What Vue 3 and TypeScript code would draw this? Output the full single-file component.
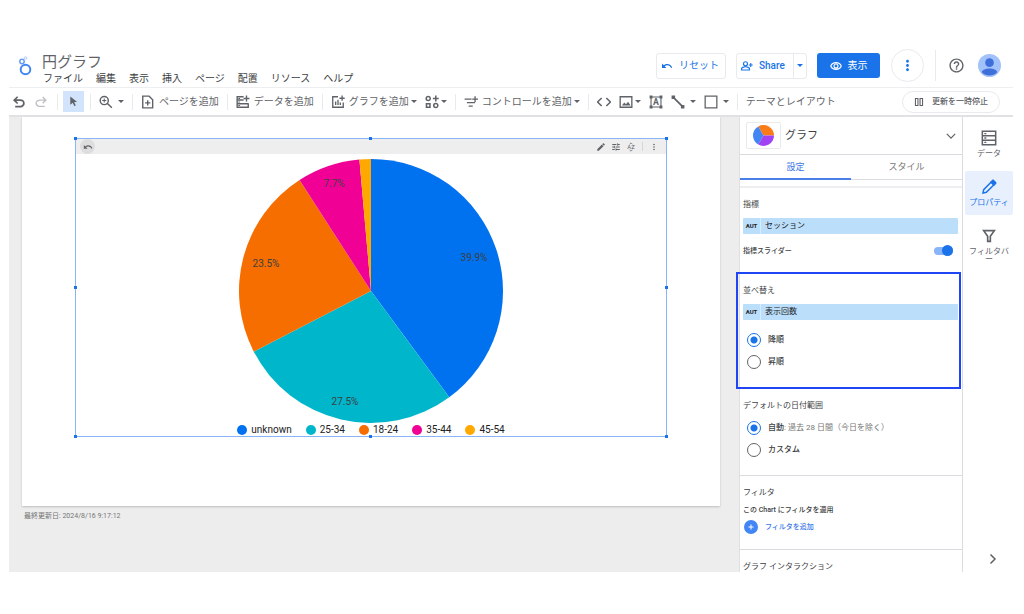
<script setup lang="ts">
import { computed, ref } from 'vue'

const line = (d: string, width = 2): string =>
  `<path d="${d}" fill="none" stroke="currentColor" stroke-width="${width}"/>`
const solid = (d: string): string => `<path d="${d}" fill="currentColor"/>`

const icons: Record<string, string> = {
  undo: solid('M6 20.500v-2.800h8.100q1.575 0 2.738-1T18.200 13.800t-1.162-2.500T14.100 10.500H7.800l3 3L9 15.200 2.500 9.100 9 2.900l1.800 1.800L7.800 7.700h6.300q2.900 0 4.800 1.700T21 13.800t-2.100 4.900T14.100 20.500z'),
  redo: `<g transform="matrix(-1 0 0 1 24 0)">${solid('M6 20v-2.200h8.100q1.575 0 2.738-1T18.500 13.800t-1.162-2.500T14.100 10.100H7.100l3 3L8.600 14.700 3 9.100 8.600 3.400l1.500 1.500L7.100 7.900h7q2.700 0 4.600 1.700T20.700 13.800t-2 4.500T14.100 20z')}</g>`,
  reset: solid('M12.5 8c-2.65 0-5.05.99-6.9 2.6L2 7v9h9l-3.62-3.62c1.39-1.16 3.16-1.88 5.12-1.88 3.54 0 6.55 2.31 7.6 5.5l2.37-.78C21.08 11.03 17.15 8 12.5 8z'),
  cursor: solid('M5 1l15 12h-6.500l3.500 7.500-3.200 1.500-3.500-7.500L5 19z'),
  zoom: line('M16 9.500a7 7 0 1 1-14 0a7 7 0 1 1 14 0M14.500 14.500L22 22', 2.5) + line('M9 6v7M5.500 9.500h7', 1.8),
  page: line('M3 2h11l6 6v14H3zM11.500 9v9M7 13.500h9', 2.4),
  data: line('M13 3H2v18h19v-7M2 8.500h11M2 15h19M18 1v10M13 6h10', 2.4) + solid('M4 5h3v2H4zM4 11h3v2H4zM4 17h3v2H4z'),
  chart: line('M12 3H3v18h18v-8M8 17v-6M12 17v-9M16 17v-4M19 1v9M14.500 5.500h9', 2.3),
  community: line('M9 6a3.500 3.500 0 1 1-7 0a3.500 3.500 0 1 1 7 0M22 18a3.500 3.500 0 1 1-7 0a3.500 3.500 0 1 1 7 0M2.500 15h6v6h-6zM18.500 1v10M13.500 6h10', 2.6),
  control: line('M1 7h12M5 13h14M8 19h7M19 2v10M14 7h10', 2.3),
  code: line('M8 5l-7 7 7 7M16 5l7 7-7 7', 2.5),
  image: line('M2 3h20v18H2z', 2.3) + solid('M5 18l4-5 3 3 3.500-4.500L20 18z'),
  textbox: line('M3.500 3.500h17v17h-17z', 1.9) + solid('M1 1h5v5H1zM18 1h5v5H18zM1 18h5v5H1zM18 18h5v5H18z') +
    '<text x="12" y="17.500" font-size="15" font-weight="700" text-anchor="middle" fill="currentColor">A</text>',
  stroke: line('M4 4l16 16', 3) + solid('M1 1h6v6H1zM17 17h6v6h-6z'),
  shape: line('M2 2h20v20H2z', 2.2),
  pause: line('M3.500 3.500h6v17h-6zM14.500 3.500h6v17h-6z', 2.6),
  person: line('M13 7.500a4 4 0 1 1-8 0a4 4 0 1 1 8 0M1 20v-2.500c0-2 4.500-4 8-4s8 2 8 4V20zM19.500 6v8M15.500 10h8', 2.3),
  eye: line('M1.500 12C5 3 19 3 22.500 12C19 21 5 21 1.500 12zM16 12a4 4 0 1 1-8 0a4 4 0 1 1 8 0', 2.2),
  more: solid('M12 8c1.100 0 2-.9 2-2s-.9-2-2-2-2 .9-2 2 .9 2 2 2zm0 2c-1.100 0-2 .9-2 2s.9 2 2 2 2-.9 2-2-.9-2-2-2zm0 6c-1.100 0-2 .9-2 2s.9 2 2 2 2-.9 2-2-.9-2-2-2z'),
  help: solid('M11 18h2v-2h-2v2zm1-16C6.480 2 2 6.480 2 12s4.480 10 10 10 10-4.480 10-10S17.520 2 12 2zm0 18c-4.410 0-8-3.590-8-8s3.590-8 8-8 8 3.590 8 8-3.590 8-8 8zm0-14c-2.210 0-4 1.790-4 4h2c0-1.100.9-2 2-2s2 .9 2 2c0 2-3 1.750-3 5h2c0-2.250 3-2.500 3-5 0-2.210-1.790-4-4-4z'),
  edit: solid('M3 17.250V21h3.750L17.810 9.940l-3.750-3.750L3 17.250zM20.710 7.040c.39-.39.39-1.020 0-1.410l-2.340-2.340c-.39-.39-1.020-.39-1.410 0l-1.830 1.830 3.750 3.750 1.830-1.830z'),
  tune: solid('M3 17v2h6v-2H3zM3 5v2h10V5H3zm10 16v-2h8v-2h-8v-2h-2v6h2zM7 9v2H3v2h4v2h2V9H7zm14 4v-2H11v2h10zm-6-4h2V7h4V5h-4V3h-2v6z'),
  sort: line('M8.500 5.500L12 2l3.500 3.500M8.500 18.500L12 22l3.500-3.500', 1.8) +
    '<text x="12" y="17" font-size="14" text-anchor="middle" fill="currentColor">AZ</text>',
  down: line('M2 7l10 10L22 7', 3),
  right: line('M7 3l9 9-9 9', 3),
  table: line('M2 2h20v20H2zM2 8.700h20M2 15.300h20', 2.3) + solid('M5 4.500h3v2H5zM5 11h3v2H5zM5 17.500h3v2H5z'),
  pen: line('M3 21l1-5L15 5l4 4L8 20z', 2.2) + solid('M14 4l2.500-2.500c1-1 2-1 3 0l3 3c1 1 1 2 0 3L20 10z'),
  funnel: line('M4 4h16L14 12.500V20h-4v-7.500z', 2.5),
}

const menus = ['ファイル', '編集', '表示', '挿入', 'ページ', '配置', 'リソース', 'ヘルプ']

interface Slice { label: string; value: number; color: string; caption?: [number, number] }
const slices: Slice[] = [
  { label: 'unknown', value: 39.9, color: '#0072f0', caption: [235, 102] },
  { label: '25-34', value: 27.5, color: '#00b6cb', caption: [106, 246] },
  { label: '18-24', value: 23.5, color: '#f66d00', caption: [27, 108] },
  { label: '35-44', value: 7.7, color: '#f10096', caption: [95, 28] },
  { label: '45-54', value: 1.4, color: '#ffa800' },
]

const wedges = computed(() => {
  let start = 0
  const c = 132
  const point = (pct: number): string => {
    const a = (pct / 100) * Math.PI * 2
    return `${(c + c * Math.sin(a)).toFixed(2)} ${(c - c * Math.cos(a)).toFixed(2)}`
  }
  return slices.map((s) => {
    const end = start + s.value
    const d = `M${c} ${c}L${point(start)}A${c} ${c} 0 0 1 ${point(end)}Z`
    start = end
    return { ...s, d }
  })
})

const handles = ['nw', 'n', 'ne', 'w', 'e', 'sw', 's', 'se']
const order = ref('desc')
const range = ref('auto')
const slider = ref(true)
</script>

<template>
  <div class="app">
    <header class="header">
      <svg class="logo" viewBox="0 0 14 20" fill="none">
        <circle cx="7.500" cy="13.500" r="4.800" stroke="#4285f4" stroke-width="2" />
        <circle cx="4" cy="5.500" r="2.200" stroke="#669df6" stroke-width="1.500" />
        <circle cx="7.500" cy="2" r="1.300" stroke="#aecbfa" />
      </svg>
      <div class="titles">
        <h1>円グラフ</h1>
        <nav class="menus"><button v-for="m in menus" :key="m" type="button">{{ m }}</button></nav>
      </div>
      <div class="actions">
        <button class="outlined reset" type="button"><svg class="i12" viewBox="0 0 24 24" v-html="icons.reset" />リセット</button>
        <div class="outlined split">
          <button class="share" type="button"><svg class="i12" viewBox="0 0 24 24" v-html="icons.person" />Share</button>
          <button class="share-more" type="button" aria-label="共有オプション"><i class="caret" /></button>
        </div>
        <button class="view" type="button"><svg class="i12" viewBox="0 0 24 24" v-html="icons.eye" />表示</button>
        <button class="round" type="button" aria-label="その他"><svg viewBox="0 0 24 24" v-html="icons.more" /></button>
        <span class="rule" />
        <button class="help" type="button" aria-label="ヘルプ"><svg viewBox="0 0 24 24" v-html="icons.help" /></button>
        <button class="avatar" type="button" aria-label="アカウント">
          <svg viewBox="0 0 24 24"><circle cx="12" cy="12" r="12" fill="#a1c2fa" /><circle cx="12" cy="9" r="4.500" fill="#3f6fd8" /><path d="M4 19c1-5 15-5 16 0a11 11 0 0 1-16 0z" fill="#3f6fd8" /></svg>
        </button>
      </div>
    </header>

    <div class="toolbar" role="toolbar">
      <div class="group history">
        <button type="button" aria-label="元に戻す"><svg class="icon" viewBox="1 1 22 22" v-html="icons.undo" /></button>
        <button class="faded" type="button" aria-label="やり直す"><svg class="icon" viewBox="1 1 22 22" v-html="icons.redo" /></button>
      </div>
      <div class="group pick">
        <button class="selected" type="button" aria-label="選択"><svg viewBox="0 0 24 24" v-html="icons.cursor" /></button>
      </div>
      <div class="group">
        <button class="loose" type="button" aria-label="ズーム"><svg class="icon" viewBox="0 0 24 24" v-html="icons.zoom" /><i class="caret" /></button>
      </div>
      <div class="group">
        <button type="button"><svg class="icon lead" viewBox="0 0 24 24" v-html="icons.page" />ページを追加</button>
      </div>
      <div class="group">
        <button type="button"><svg class="icon lead" viewBox="0 0 24 24" v-html="icons.data" />データを追加</button>
      </div>
      <div class="group">
        <button type="button"><svg class="icon lead" viewBox="0 0 24 24" v-html="icons.chart" />グラフを追加<i class="caret" /></button>
        <button type="button" aria-label="コミュニティ"><svg class="icon" viewBox="0 0 24 24" v-html="icons.community" /><i class="caret" /></button>
      </div>
      <div class="group">
        <button type="button"><svg class="icon lead" viewBox="0 0 24 24" v-html="icons.control" />コントロールを追加<i class="caret" /></button>
      </div>
      <div class="group">
        <button type="button" aria-label="埋め込み"><svg class="icon" viewBox="0 0 24 24" v-html="icons.code" /></button>
        <button type="button" aria-label="画像"><svg class="icon" viewBox="0 0 24 24" v-html="icons.image" /><i class="caret" /></button>
        <button type="button" aria-label="テキスト"><svg class="icon" viewBox="0 0 24 24" v-html="icons.textbox" /></button>
        <button class="loose" type="button" aria-label="線"><svg class="icon" viewBox="0 0 24 24" v-html="icons.stroke" /><i class="caret" /></button>
        <button class="loose" type="button" aria-label="図形"><svg class="icon" viewBox="0 0 24 24" v-html="icons.shape" /><i class="caret" /></button>
      </div>
      <div class="group"><button type="button">テーマとレイアウト</button></div>
      <button class="pause" type="button"><svg viewBox="0 0 24 24" v-html="icons.pause" />更新を一時停止</button>
    </div>

    <div class="workspace">
      <main class="canvas">
        <div class="page">
          <section class="chart">
            <div class="chart-bar">
              <button class="chart-undo" type="button" aria-label="リセット"><svg viewBox="0 0 24 24" v-html="icons.reset" /></button>
              <div class="chart-tools">
                <button type="button" aria-label="編集"><svg viewBox="0 0 24 24" v-html="icons.edit" /></button>
                <button type="button" aria-label="調整"><svg viewBox="0 0 24 24" v-html="icons.tune" /></button>
                <button type="button" aria-label="並べ替え"><svg viewBox="0 0 24 24" v-html="icons.sort" /></button>
                <span class="bar-rule" />
                <button type="button" aria-label="その他"><svg viewBox="0 0 24 24" v-html="icons.more" /></button>
              </div>
            </div>
            <svg class="pie" viewBox="0 0 264 264" role="img" aria-label="円グラフ">
              <path v-for="w in wedges" :key="w.label" :d="w.d" :fill="w.color" />
              <template v-for="w in wedges" :key="w.label">
                <text v-if="w.caption" :x="w.caption[0]" :y="w.caption[1]" text-anchor="middle">{{ w.value }}%</text>
              </template>
            </svg>
            <ul class="legend">
              <li v-for="s in slices" :key="s.label">
                <svg viewBox="0 0 10 10"><circle cx="5" cy="5" r="5" :fill="s.color" /></svg>{{ s.label }}
              </li>
            </ul>
            <span v-for="h in handles" :key="h" class="handle" :class="h" />
          </section>
        </div>
        <p class="updated">最終更新日: 2024/8/16 9:17:12</p>
      </main>

      <aside class="panel">
        <div class="panel-head">
          <span class="thumb">
            <svg viewBox="0 0 20 20"><path d="M10 10H20A10 10 0 0 0 5 1.340z" fill="#fa7b17" /><path d="M10 10L5 1.340A10 10 0 0 0 5 18.660z" fill="#4285f4" /><path d="M10 10L5 18.660A10 10 0 0 0 20 10z" fill="#a142f4" /></svg>
          </span>
          <h2>グラフ</h2>
          <button class="expand" type="button" aria-label="グラフの種類"><svg viewBox="0 0 24 24" v-html="icons.down" /></button>
        </div>
        <div class="tabs" role="tablist">
          <button class="active" type="button" role="tab" aria-selected="true">設定</button>
          <button type="button" role="tab" aria-selected="false">スタイル</button>
        </div>
        <section class="metric">
          <h3>指標</h3>
          <button class="chip" type="button"><b>AUT</b><span>セッション</span></button>
          <label class="slider-row">指標スライダー<input v-model="slider" class="toggle" type="checkbox" /></label>
        </section>
        <section class="sorting">
          <h3>並べ替え</h3>
          <button class="chip" type="button"><b>AUT</b><span>表示回数</span></button>
          <div class="radios">
            <label><input v-model="order" type="radio" name="order" value="desc" /><span>降順</span></label>
            <label><input v-model="order" type="radio" name="order" value="asc" /><span>昇順</span></label>
          </div>
        </section>
        <section class="dates">
          <h3>デフォルトの日付範囲</h3>
          <div class="radios">
            <label><input v-model="range" type="radio" name="range" value="auto" /><span>自動<small>: 過去 28 日間（今日を除く）</small></span></label>
            <label><input v-model="range" type="radio" name="range" value="custom" /><span>カスタム</span></label>
          </div>
        </section>
        <section class="filters">
          <h3>フィルタ</h3>
          <p>この Chart にフィルタを適用</p>
          <button class="add" type="button">
            <svg viewBox="0 0 14 14"><circle cx="7" cy="7" r="7" fill="#4285f4" /><path d="M7 4.500v5M4.500 7h5" stroke="#fff" /></svg>フィルタを追加
          </button>
        </section>
        <section class="interaction"><h3>グラフ インタラクション</h3></section>
      </aside>

      <nav class="rail">
        <button type="button"><svg viewBox="0 0 24 24" v-html="icons.table" />データ</button>
        <button class="current" type="button"><svg viewBox="0 0 24 24" v-html="icons.pen" />プロパティ</button>
        <button type="button"><svg viewBox="0 0 24 24" v-html="icons.funnel" />フィルタバー</button>
        <button class="collapse" type="button" aria-label="閉じる"><svg viewBox="0 0 24 24" v-html="icons.right" /></button>
      </nav>
    </div>
  </div>
</template>

<style>
html,
body {
  background: #fff;
}
</style>

<style scoped>
.app {
  box-sizing: border-box;
  height: 100vh;
  padding: 48px 11px 42px 9px;
  display: flex;
  flex-direction: column;
  overflow: hidden;
  font-family: Roboto, 'Noto Sans CJK JP', sans-serif;
  font-size: 10px;
  line-height: 12px;
  color: #5f6368;
}
.app * {
  box-sizing: border-box;
}
button {
  display: flex;
  align-items: center;
  margin: 0;
  padding: 0;
  border: 0;
  background: none;
  font: inherit;
  color: inherit;
  white-space: nowrap;
}
svg {
  display: block;
  flex: none;
}
h1,
h2,
h3,
p,
ul {
  margin: 0;
  padding: 0;
  font-weight: 400;
}
.caret {
  border: 3px solid transparent;
  border-top-color: currentColor;
  border-bottom: 0;
}
.i12 {
  width: 12px;
  height: 12px;
}

.header {
  flex: none;
  height: 39px;
  display: flex;
  padding-left: 9px;
}
.logo {
  width: 14px;
  height: 20px;
  margin-top: 8px;
}
.titles {
  margin-left: 10px;
}
h1 {
  margin-top: 4px;
  font-size: 15px;
  line-height: 21px;
}
.menus {
  display: flex;
  gap: 13px;
  color: #3c4043;
  padding-left: 1px;
}
.actions {
  margin-left: auto;
  height: 35px;
  display: flex;
  align-items: center;
  padding-right: 12px;
  color: #1a73e8;
}
.outlined {
  height: 26px;
  border: 1px solid #e8eaed;
  border-radius: 3px;
}
.reset {
  width: 70px;
  gap: 6px;
  padding-left: 4px;
}
.split {
  display: flex;
  margin-left: 10px;
}
.share {
  width: 56px;
  gap: 6px;
  padding-left: 4px;
  font-weight: 500;
}
.share-more {
  width: 13px;
  justify-content: center;
  border-left: 1px solid #e8eaed;
}
.view {
  width: 63px;
  height: 25px;
  gap: 6px;
  justify-content: center;
  margin-left: 10px;
  border-radius: 3px;
  background: #1a73e8;
  color: #fff;
}
.round {
  width: 33px;
  height: 33px;
  justify-content: center;
  margin-left: 11px;
  border: 1px solid #e8eaed;
  border-radius: 50%;
}
.round svg {
  width: 17px;
  height: 17px;
}
.rule {
  width: 1px;
  height: 31px;
  margin-left: 11px;
  background: #e8eaed;
}
.help {
  margin-left: 12px;
  color: #5f6368;
}
.help svg {
  width: 17px;
  height: 17px;
}
.avatar {
  margin-left: 13px;
}
.avatar svg {
  width: 23px;
  height: 23px;
}

.toolbar {
  flex: none;
  height: 30px;
  display: flex;
  align-items: center;
  border-top: 1px solid #eceef0;
  border-bottom: 2px solid #dfe1e4;
}
.group {
  height: 16px;
  display: flex;
  align-items: center;
  gap: 8px;
  padding: 0 8px;
  border-left: 1px solid #e8eaed;
}
.group button {
  gap: 2px;
}
.group .loose {
  gap: 5px;
}
.group.history {
  padding-left: 3px;
  padding-right: 9px;
  border-left: 0;
}
.group.pick {
  padding: 0 6px 0 5px;
}
.group .selected {
  width: 21px;
  height: 21px;
  justify-content: center;
  background: #d2e3fc;
}
.selected svg {
  width: 11px;
  height: 11px;
}
.group .faded {
  color: #bdc1c6;
}
.icon {
  width: 14px;
  height: 14px;
}
.icon.lead {
  margin-right: 2px;
}
.pause {
  width: 98px;
  height: 22px;
  gap: 8px;
  justify-content: center;
  margin-left: auto;
  margin-right: 13px;
  border: 1px solid #e8eaed;
  border-radius: 11px;
  font-size: 8px;
  font-weight: 500;
  color: #5f6368;
}
.pause svg {
  width: 10px;
  height: 10px;
}

.workspace {
  flex: 1;
  min-height: 0;
  display: flex;
  overflow: hidden;
}
.canvas {
  flex: 1;
  min-width: 0;
  background: #ededed;
}
.page {
  margin: 0 19px 0 13px;
  padding: 21px 53px 69px;
  background: #fff;
  box-shadow: 0 1px 2px #bdbdbd;
}
.chart {
  position: relative;
  height: 299px;
  border: 1px solid #8ab4f8;
}
.chart-bar {
  height: 15px;
  display: flex;
  align-items: center;
  justify-content: space-between;
  padding: 0 7px 0 4px;
  background: #eee;
}
.chart-undo {
  width: 15px;
  height: 15px;
  justify-content: center;
  border-radius: 50%;
  background: #ddd;
}
.chart-bar svg {
  width: 10px;
  height: 10px;
}
.chart-tools {
  display: flex;
  align-items: center;
  gap: 5px;
}
.bar-rule {
  width: 1px;
  height: 9px;
  margin: 0 1px;
  background: #d6d6d6;
}
.pie {
  width: 264px;
  height: 264px;
  margin: 5px auto 0;
}
.pie text {
  font-size: 10px;
  fill: #3c4043;
}
.legend {
  display: flex;
  justify-content: center;
  gap: 14px;
  list-style: none;
  line-height: 14px;
  color: #212121;
}
.legend li {
  display: flex;
  align-items: center;
  gap: 4px;
}
.legend svg {
  width: 10px;
  height: 10px;
}
.handle {
  position: absolute;
  width: 3px;
  height: 3px;
  margin: -2px;
  background: #1a73e8;
}
.nw, .n, .ne { top: 0; }
.sw, .s, .se { bottom: 0; }
.w, .e { top: 50%; }
.nw, .w, .sw { left: 0; }
.ne, .e, .se { right: 0; }
.n, .s { left: 50%; }
.updated {
  margin-top: 4px;
  padding-left: 15px;
  font-size: 7px;
  color: #757575;
}

.panel {
  position: relative;
  flex: none;
  width: 224px;
  border-left: 1px solid #e0e0e0;
  border-right: 1px solid #dadce0;
  font-size: 8px;
  color: #3c4043;
}
.panel-head {
  height: 38px;
  display: flex;
  align-items: center;
  padding: 0 6px;
  border-bottom: 1px solid #dadce0;
}
.thumb {
  padding: 2px 6px;
  border: 1px solid #e8eaed;
  border-radius: 2px;
}
.thumb svg {
  width: 21px;
  height: 21px;
}
h2 {
  margin-left: 4px;
  font-size: 11px;
}
.expand {
  margin-left: auto;
  color: #5f6368;
}
.expand svg {
  width: 10px;
  height: 10px;
}
.tabs {
  display: flex;
  height: 25px;
  border-bottom: 1px solid #dadce0;
  font-size: 9px;
}
.tabs button {
  flex: 1;
  justify-content: center;
  color: #757575;
}
.tabs .active {
  color: #3b78e7;
  margin-bottom: -1px;
  border-bottom: 2px solid #4a7fe8;
}
.panel section {
  padding: 11px 4px 0 3px;
}
h3 {
  font-size: 8px;
  line-height: 12px;
}
.metric {
  margin-top: 6px;
  border-top: 2px solid #eceef0;
}
.chip {
  width: 100%;
  height: 16px;
  margin-top: 7px;
  border-radius: 1px;
  background: #bbdefb;
  color: #212121;
}
.chip b {
  width: 18px;
  line-height: 16px;
  font-size: 6px;
  text-align: center;
  border-right: 1px solid #d7ecfd;
}
.chip span {
  margin-left: 4px;
}
.slider-row {
  display: flex;
  align-items: center;
  justify-content: space-between;
  height: 12px;
  margin: 11px 5px 15px 0;
  font-size: 7px;
  font-weight: 500;
}
.toggle {
  appearance: none;
  position: relative;
  width: 19px;
  height: 8px;
  margin: 0;
  border-radius: 4px;
  background: #dadce0;
}
.toggle:checked {
  background: #8ab4f8;
}
.toggle::after {
  content: '';
  position: absolute;
  left: 0;
  top: -2px;
  width: 11px;
  height: 11px;
  border-radius: 50%;
  background: #1a73e8;
}
.toggle:checked::after {
  left: auto;
  right: 0;
}
.panel .sorting {
  position: relative;
  padding-top: 13px;
  padding-bottom: 19px;
}
.sorting::after {
  content: '';
  position: absolute;
  inset: 0 1px 0 -4px;
  border: 2px solid #1f45f5;
  pointer-events: none;
}
.radios {
  display: grid;
  gap: 6px;
  padding: 12px 0 0 4px;
  font-weight: 500;
}
.radios label {
  display: flex;
  align-items: center;
  height: 16px;
  gap: 7px;
}
.radios small {
  font-size: 8px;
  font-weight: 400;
  color: #757575;
}
.radios input {
  appearance: none;
  width: 14px;
  height: 14px;
  margin: 0;
  border: 1px solid #5f6368;
  border-radius: 50%;
}
.radios input:checked {
  border: 1px solid #1a73e8;
  background: radial-gradient(circle, #1a73e8 3px, transparent 4px);
}
.panel .dates {
  padding-bottom: 17px;
}
.dates .radios {
  padding-top: 8px;
}
.filters,
.interaction {
  border-top: 1px solid #dadce0;
}
.panel .filters {
  padding-bottom: 14px;
}
.filters p {
  margin-top: 5px;
  font-size: 7px;
  font-weight: 500;
}
.add {
  height: 16px;
  margin-top: 3px;
  gap: 7px;
  padding-left: 1px;
  font-size: 7px;
  font-weight: 500;
  color: #3b78e7;
}
.add svg {
  width: 14px;
  height: 14px;
}

.rail {
  flex: none;
  width: 50px;
  display: flex;
  flex-direction: column;
  gap: 5px;
  padding: 5px 0 5px 2px;
  font-size: 8px;
}
.rail button {
  min-height: 44px;
  flex-direction: column;
  gap: 4px;
  padding-top: 8px;
  line-height: 8px;
  white-space: normal;
  border-radius: 2px;
}
.rail button:nth-child(3) {
  padding-left: 3px;
  padding-right: 3px;
  word-break: break-all;
}
.rail svg {
  width: 16px;
  height: 16px;
}
.rail .current {
  background: #e8f0fe;
  color: #1a73e8;
}
.rail .collapse {
  min-height: 14px;
  padding: 0;
  margin: auto auto 0 22px;
}
.rail .collapse svg {
  width: 12px;
  height: 12px;
}
</style>
